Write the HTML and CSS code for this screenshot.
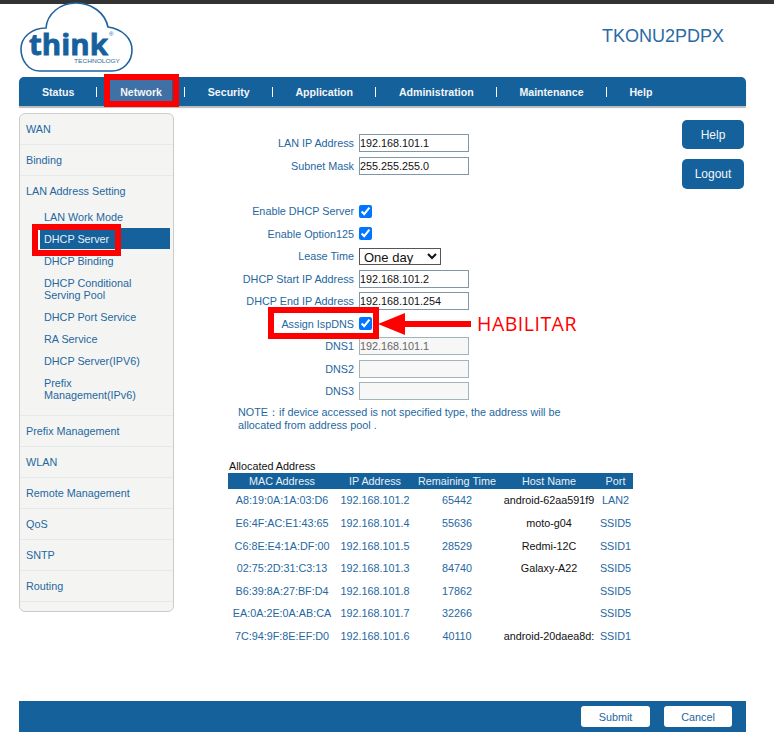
FILE: index.html
```html
<!DOCTYPE html>
<html lang="en">
<head>
    <meta charset="UTF-8">
    <meta name="viewport" content="width=device-width, initial-scale=1.0">
    <title>DHCP Server</title>
    <link rel="stylesheet" href="styles.css">
</head>
<body>
    <div class="top-strip"></div>

    <div class="page">
        <!-- Header -->
        <div class="header">
            <svg class="logo" width="114" height="73" viewBox="20 0 114 73">
                <path class="logo-cloud" d="M40 71 C28 71 21 60 21 49 C21 37 32 28 46 28 C47 14 60 3 76 3 C92 3 105 13 108 27 C122 29 132 38 132 50 C132 62 123 71 112 71 Z"/>
                <text class="logo-word" x="29" y="55" textLength="79" lengthAdjust="spacingAndGlyphs">think</text>
                <text class="logo-reg" x="109" y="36">®</text>
                <text class="logo-sub" x="74" y="63" textLength="46" lengthAdjust="spacingAndGlyphs">TECHNOLOGY</text>
            </svg>
            <div class="model">TKONU2PDPX</div>
        </div>

        <!-- Top menu -->
        <ul class="nav">
            <li><a>Status</a></li>
            <li class="current"><a>Network</a></li>
            <li><a>Security</a></li>
            <li><a>Application</a></li>
            <li><a>Administration</a></li>
            <li><a>Maintenance</a></li>
            <li class="last"><a>Help</a></li>
        </ul>

        <div class="main">
            <!-- Side menu -->
            <div class="sidebar">
                <div class="side-item">WAN</div>
                <div class="side-item">Binding</div>
                <div class="side-group">
                    <div class="side-title">LAN Address Setting</div>
                    <div class="sub-item">LAN Work Mode</div>
                    <div class="sub-item active">DHCP Server</div>
                    <div class="sub-item">DHCP Binding</div>
                    <div class="sub-item two-line">DHCP Conditional Serving Pool</div>
                    <div class="sub-item">DHCP Port Service</div>
                    <div class="sub-item">RA Service</div>
                    <div class="sub-item">DHCP Server(IPV6)</div>
                    <div class="sub-item two-line">Prefix Management(IPv6)</div>
                </div>
                <div class="side-item">Prefix Management</div>
                <div class="side-item">WLAN</div>
                <div class="side-item">Remote Management</div>
                <div class="side-item">QoS</div>
                <div class="side-item">SNTP</div>
                <div class="side-item">Routing</div>
            </div>

            <!-- Settings -->
            <div class="content">
                <div class="form-group">
                    <div class="row"><label>LAN IP Address</label><input type="text" value="192.168.101.1"></div>
                    <div class="row"><label>Subnet Mask</label><input type="text" value="255.255.255.0"></div>
                </div>
                <div class="form-group">
                    <div class="row"><label>Enable DHCP Server</label><input type="checkbox" checked></div>
                    <div class="row"><label>Enable Option125</label><input type="checkbox" checked></div>
                    <div class="row"><label>Lease Time</label><select><option>One day</option></select></div>
                    <div class="row"><label>DHCP Start IP Address</label><input type="text" value="192.168.101.2"></div>
                    <div class="row"><label>DHCP End IP Address</label><input type="text" value="192.168.101.254"></div>
                    <div class="row"><label>Assign IspDNS</label><input type="checkbox" checked></div>
                    <div class="row"><label>DNS1</label><input class="dns" type="text" value="192.168.101.1" disabled></div>
                    <div class="row"><label>DNS2</label><input class="dns" type="text" disabled></div>
                    <div class="row"><label>DNS3</label><input class="dns" type="text" disabled></div>
                </div>
                <p class="note">NOTE：if device accessed is not specified type, the address will be allocated from address pool .</p>

                <div class="allocated">
                    <div class="allocated-title">Allocated Address</div>
                    <table>
                        <thead>
                            <tr><th class="col-mac">MAC Address</th><th class="col-ip">IP Address</th><th class="col-time">Remaining Time</th><th class="col-host">Host Name</th><th class="col-port">Port</th></tr>
                        </thead>
                        <tbody>
                            <tr><td>A8:19:0A:1A:03:D6</td><td>192.168.101.2</td><td>65442</td><td class="host"><div>android-62aa591f9</div></td><td>LAN2</td></tr>
                            <tr><td>E6:4F:AC:E1:43:65</td><td>192.168.101.4</td><td>55636</td><td class="host"><div>moto-g04</div></td><td>SSID5</td></tr>
                            <tr><td>C6:8E:E4:1A:DF:00</td><td>192.168.101.5</td><td>28529</td><td class="host"><div>Redmi-12C</div></td><td>SSID1</td></tr>
                            <tr><td>02:75:2D:31:C3:13</td><td>192.168.101.3</td><td>84740</td><td class="host"><div>Galaxy-A22</div></td><td>SSID5</td></tr>
                            <tr><td>B6:39:8A:27:BF:D4</td><td>192.168.101.8</td><td>17862</td><td class="host"><div></div></td><td>SSID5</td></tr>
                            <tr><td>EA:0A:2E:0A:AB:CA</td><td>192.168.101.7</td><td>32266</td><td class="host"><div></div></td><td>SSID5</td></tr>
                            <tr><td>7C:94:9F:8E:EF:D0</td><td>192.168.101.6</td><td>40110</td><td class="host clip"><div>android-20daea8d:</div></td><td>SSID1</td></tr>
                        </tbody>
                    </table>
                </div>
            </div>

            <div class="side-buttons">
                <button class="blue-btn help-btn">Help</button>
                <button class="blue-btn logout-btn">Logout</button>
            </div>
        </div>

        <!-- Footer -->
        <div class="footer">
            <button class="white-btn">Submit</button>
            <button class="white-btn cancel-btn">Cancel</button>
        </div>
    </div>

    <!-- Red marks drawn over the screenshot -->
    <div class="mark mark-network"></div>
    <div class="mark mark-dhcp"></div>
    <div class="mark mark-assign"></div>
    <svg class="mark-arrow" width="94" height="24" viewBox="0 0 94 24">
        <path d="M0 12 L27 1 L27 9 L93 9 L93 15 L27 15 L27 23 Z"/>
    </svg>
    <div class="mark-label">HABILITAR</div>
</body>
</html>
```

FILE: styles.css
```css
html, body {
    margin: 0;
    padding: 0;
    overflow: hidden;
}
body {
    font-family: "Liberation Sans", Arial, sans-serif;
    font-size: 10.8px;
    background-color: #fff;
    color: #25679f;
    height: 750px;
}
.top-strip {
    height: 4px;
    background-color: #333;
}
.page {
    width: 727px;
    margin-left: 19px;
}
/* Header */
.header {
    height: 73px;
    display: flex;
    justify-content: space-between;
}
.logo {
    margin-left: 1px;
    margin-top: -4px;
}
.logo-cloud {
    fill: #fff;
    stroke: #1f62a0;
    stroke-width: 1.6;
}
.logo-word {
    font-family: "Open Sans", sans-serif;
    font-weight: 700;
    font-size: 29px;
    fill: #15609d;
    stroke: #15609d;
    stroke-width: 0.8;
}
.logo-reg {
    font-size: 6px;
    fill: #15609d;
}
.logo-sub {
    font-size: 6px;
    fill: #2d6aa0;
}
.model {
    font-size: 18px;
    color: #2a6aa5;
    margin-top: 22px;
    margin-right: 22px;
}
/* Top menu */
.nav {
    list-style: none;
    margin: 0;
    padding: 0 0 0 13px;
    height: 29px;
    display: flex;
    align-items: center;
    gap: 25.8px;
    background-color: #15619b;
    border-radius: 5px 5px 0 0;
    box-shadow: 0 2px 1px #bbb;
}
.nav li {
    position: relative;
}
.nav a {
    display: block;
    padding: 0 10px;
    height: 24px;
    line-height: 24px;
    font-size: 10.6px;
    color: #f2f6fa;
    font-weight: bold;
}
.nav .current a {
    background-color: #3f70a6;
}
.nav li::after {
    content: "";
    position: absolute;
    right: -13px;
    top: 7px;
    width: 1px;
    height: 10px;
    background-color: #fff;
}
.nav li.last::after {
    display: none;
}
.main {
    height: 595px;
    display: flex;
}
/* Side menu */
.sidebar {
    width: 153px;
    height: 497px;
    margin-top: 7px;
    background-color: #f4f5f3;
    border: 1px solid #ccc;
    border-radius: 6px;
}
.side-item {
    height: 30px;
    line-height: 30px;
    padding-left: 6px;
    border-bottom: 1px solid #e6e9ea;
}
.side-group {
    height: 239px;
    border-bottom: 1px solid #e6e9ea;
}
.side-title {
    height: 30px;
    line-height: 30px;
    padding-left: 6px;
}
.sub-item {
    height: 22px;
    line-height: 22px;
    margin-left: 20px;
    margin-right: 3px;
    padding-left: 4px;
}
.sub-item.two-line {
    height: 24px;
    line-height: 12px;
    padding-top: 5px;
    padding-bottom: 5px;
    padding-right: 16px;
}
.sub-item.active {
    background-color: #15619b;
    color: #e8f0f6;
    box-shadow: -2px 0 0 #fff;
    height: 21px;
    line-height: 22px;
    margin-bottom: 1px;
}
/* Settings form */
.content {
    flex: 1;
    padding-top: 26px;
}
.form-group {
    margin-bottom: 23px;
}
.row {
    height: 22.5px;
    display: flex;
    align-items: center;
}
.row label {
    width: 180px;
    margin-right: 5px;
    text-align: right;
}
.row input[type="text"] {
    width: 110px;
    height: 18px;
    box-sizing: border-box;
    padding: 0;
    font-family: "Liberation Sans", Arial, sans-serif;
    font-size: 10.8px;
    color: #111;
    border: 1px solid #7f97a8;
    border-radius: 0;
    background: #fff;
}
.row input.dns {
    color: #666;
    border-color: #a4b2ba;
    background: #f7f7f7;
}
.row input[type="checkbox"] {
    width: 13px;
    height: 13px;
    margin: 0;
}
.row select {
    width: 82px;
    height: 17px;
    font-family: "Liberation Sans", Arial, sans-serif;
    font-size: 13px;
    color: #111;
    background: #fff;
    border: 1px solid #555;
    border-radius: 0;
    padding: 0;
}
.note {
    margin: -20px 0 0 64px;
    width: 330px;
    line-height: 13px;
}
/* Allocated table */
.allocated {
    margin-left: 54px;
    margin-top: 28px;
}
.allocated-title {
    color: #111;
    line-height: 13px;
    margin-left: 1px;
}
table {
    width: 405px;
    table-layout: fixed;
    border-collapse: collapse;
}
th {
    height: 16px;
    padding: 0;
    background-color: #15619b;
    color: #e8f0f6;
    font-weight: normal;
}
td {
    height: 22.5px;
    padding: 0;
    text-align: center;
    white-space: nowrap;
}
tbody tr:first-child td {
    height: 23.5px;
}
.col-mac { width: 108px; }
.col-ip { width: 78px; }
.col-time { width: 86px; }
.col-host { width: 98px; }
.col-port { width: 35px; }
.host {
    color: #111;
}
.host div {
    width: 91px;
    margin: 0 auto;
    overflow: hidden;
}
/* Right buttons */
.side-buttons {
    width: 64px;
    padding-top: 14px;
    display: flex;
    flex-direction: column;
    gap: 10px;
}
.blue-btn {
    width: 62px;
    height: 29px;
    background-color: #15619b;
    color: #f2f6fa;
    font-family: "Liberation Sans", Arial, sans-serif;
    font-size: 12px;
    border: none;
    border-radius: 5px;
    padding: 0;
}
.logout-btn {
    height: 30px;
}
/* Footer */
.footer {
    height: 31px;
    display: flex;
    justify-content: flex-end;
    align-items: center;
    gap: 14px;
    padding-right: 14px;
    background-color: #15619b;
}
.white-btn {
    width: 69px;
    height: 21px;
    background-color: #fff;
    color: #25679f;
    font-family: "Liberation Sans", Arial, sans-serif;
    font-size: 10.8px;
    border: none;
    border-radius: 3px;
    padding: 0;
}
.cancel-btn {
    width: 68px;
}
/* Red marks */
.mark {
    position: absolute;
    box-sizing: border-box;
    border: 6px solid #f00;
}
.mark-network {
    left: 104px;
    top: 74px;
    width: 75px;
    height: 33px;
}
.mark-dhcp {
    left: 32px;
    top: 224px;
    width: 89px;
    height: 32px;
}
.mark-assign {
    left: 268px;
    top: 307px;
    width: 111px;
    height: 32px;
}
.mark-arrow {
    position: absolute;
    left: 378px;
    top: 312px;
    fill: #f00;
}
.mark-label {
    position: absolute;
    left: 477px;
    top: 311px;
    font-family: "Open Sans", sans-serif;
    font-size: 19.5px;
    letter-spacing: 0.5px;
    line-height: 25px;
    color: #f00;
}
```
